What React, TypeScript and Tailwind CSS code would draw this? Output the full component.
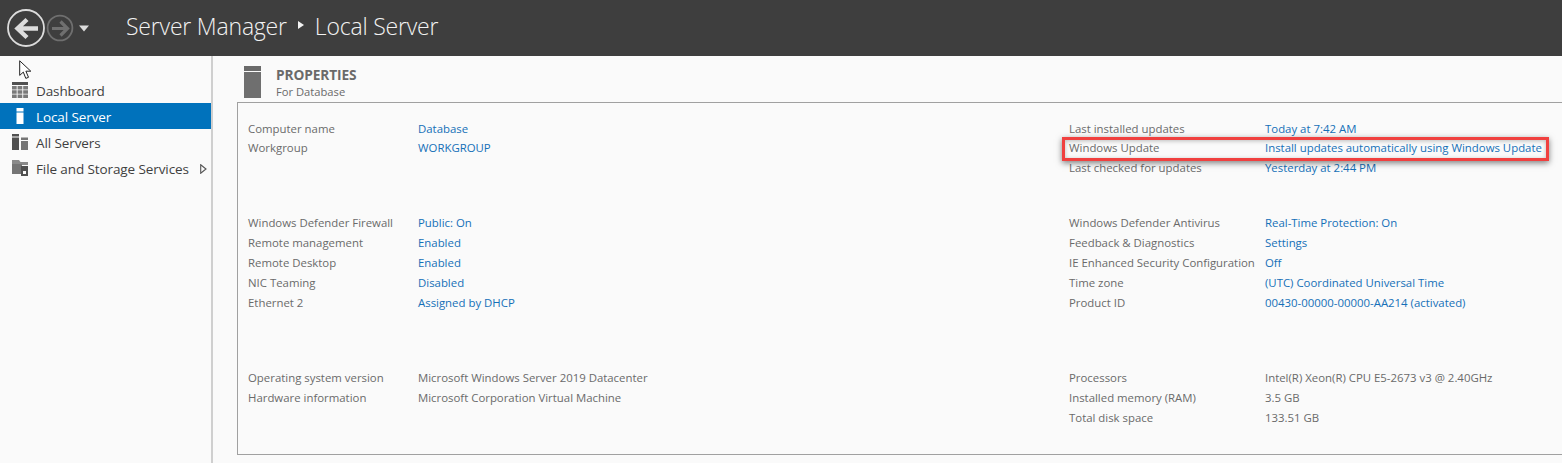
const font = { fontFamily: '"Open Sans", "Noto Sans", sans-serif' };

type Row = [string, string, boolean?];

function Rows({ rows, rowClass, valueX }: { rows: Row[]; rowClass: string; valueX: string }) {
  return (
    <div className="flex flex-col">
      {rows.map(([k, v, plain]) => (
        <div key={k} className={`flex items-center whitespace-nowrap ${rowClass}`}>
          <div className={`${valueX} shrink-0 text-[#6a6a6a]`}>{k}</div>
          <div className={plain ? "text-[#6a6a6a]" : "text-[#1570b8]"}>{v}</div>
        </div>
      ))}
    </div>
  );
}

function NavItem({ icon, label, active, arrow }: { icon: React.ReactNode; label: string; active?: boolean; arrow?: boolean }) {
  return (
    <div className={`flex h-[26px] items-center pl-3 text-[13.5px] tracking-[-0.1px] ${active ? "bg-[#0072bc] text-white" : "text-[#3f3f3f]"}`}>
      <div className="w-4 h-4 mr-2 shrink-0">{icon}</div>
      <span className="pt-[2px]">{label}</span>
      {arrow && (
        <svg width="7" height="10" viewBox="0 0 7 10" className="ml-[11px] mt-[2px]">
          <path d="M.7.7 6 5 .7 9.3Z" fill="none" stroke="#555" strokeWidth="1.1" />
        </svg>
      )}
    </div>
  );
}

export default function App() {
  return (
    <div style={font} className="relative flex h-[463px] w-[1562px] flex-col overflow-hidden bg-[#fafafa]">
      <header className="flex h-[56px] shrink-0 items-center bg-[#3e3e3e] text-[#f2f2f2]">
        <svg width="92" height="50" viewBox="0 0 92 50" className="ml-[6px] shrink-0">
          <g transform="translate(-6 0)">
            <circle cx="26" cy="25" r="18" fill="none" stroke="#dcdcdc" strokeWidth="1.8" />
            <path d="M38 25.5H18M27 16.5l-9.5 9 9.5 9" fill="none" stroke="#dcdcdc" strokeWidth="4.4" />
            <circle cx="60" cy="25" r="12.4" fill="none" stroke="#6f6f6f" strokeWidth="1.8" />
            <path d="M52 25.5h15M60.5 18.5l7 7-7 7" fill="none" stroke="#6f6f6f" strokeWidth="3.2" />
            <path d="M79 22.5h10l-5 6Z" fill="#dcdcdc" />
          </g>
        </svg>
        <div className="ml-[28px] flex items-center pb-[3px] text-[23px] font-light tracking-[-0.2px]">
          <span>Server Manager</span>
          <svg width="6" height="8" viewBox="0 0 6 8" className="mx-[11px] mb-[3px]">
            <path d="M0 0 6 4 0 8Z" fill="#f2f2f2" />
          </svg>
          <span>Local Server</span>
        </div>
      </header>

      <div className="flex min-h-0 flex-1">
        <aside className="w-[213px] shrink-0 border-r-2 border-[#cfcfcf] pt-[21px]">
          <NavItem
            label="Dashboard"
            icon={
              <svg viewBox="0 0 16 16" className="h-4 w-4">
                <path d="M0 0h16v3H0z" fill="#505050" />
                <path d="M0 4h4.7v3.5H0zM5.6 4h4.7v3.5H5.6zM11.2 4H16v3.5h-4.8zM0 8.3h4.7v3.5H0zM5.6 8.3h4.7v3.5H5.6zM11.2 8.3H16v3.5h-4.8zM0 12.6h4.7V16H0zM5.6 12.6h4.7V16H5.6zM11.2 12.6H16V16h-4.8z" fill="#7a7a7a" />
              </svg>
            }
          />
          <NavItem
            active
            label="Local Server"
            icon={
              <svg viewBox="0 0 16 16" className="h-4 w-4">
                <path d="M4.5 0h7v3.4h-7zM4.5 4.6h7V16h-7z" fill="#fff" />
              </svg>
            }
          />
          <NavItem
            label="All Servers"
            icon={
              <svg viewBox="0 0 16 16" className="h-4 w-4">
                <path d="M0 0h7v2.6H0zM0 3.6h7V16H0z" fill="#505050" />
                <path d="M9 3.5h7v2.4H9zM9 7h7v9H9z" fill="#757575" />
              </svg>
            }
          />
          <NavItem
            arrow
            label="File and Storage Services"
            icon={
              <svg viewBox="0 0 16 16" className="h-4 w-4">
                <path d="M0 0h7l1.5 2H16v3H0z" fill="#8a8a8a" />
                <path d="M0 4h10v10H0z" fill="#757575" />
                <path d="M9 6h7v10H9z" fill="#505050" />
                <path d="M11 11h3v3h-3z" fill="#fafafa" />
              </svg>
            }
          />
        </aside>

        <main className="min-w-0 flex-1 pl-[24px]">
          <div className="flex h-[46px] items-start pl-[7px] pt-[10px]">
            <svg width="17" height="32" viewBox="0 0 17 32" className="shrink-0">
              <path d="M0 0h17v5H0z" fill="#6a6a6a" />
              <path d="M0 6h17v26H0z" fill="#6f6f6f" />
            </svg>
            <div className="ml-[15px] -mt-[1px]">
              <div className="text-[13.7px] font-bold leading-[19px] tracking-[-0.1px] text-[#6a6a6a]">PROPERTIES</div>
              <div className="text-[11.2px] leading-[16px] text-[#6a6a6a]">For Database</div>
            </div>
          </div>

          <section className="-mr-2 grid h-[353px] grid-cols-[821px_1fr] border border-[#a0a0a0] pl-[10px] text-[11.4px]">
            <div className="flex flex-col pt-[15.5px]">
              <Rows valueX="w-[170px]" rowClass="h-[19.5px]" rows={[["Computer name", "Database"], ["Workgroup", "WORKGROUP"]]} />
              <div className="mt-[55.5px]">
                <Rows
                  valueX="w-[170px]"
                  rowClass="h-5"
                  rows={[
                    ["Windows Defender Firewall", "Public: On"],
                    ["Remote management", "Enabled"],
                    ["Remote Desktop", "Enabled"],
                    ["NIC Teaming", "Disabled"],
                    ["Ethernet 2", "Assigned by DHCP"],
                  ]}
                />
              </div>
              <div className="mt-[55px]">
                <Rows
                  valueX="w-[170px]"
                  rowClass="h-5"
                  rows={[
                    ["Operating system version", "Microsoft Windows Server 2019 Datacenter", true],
                    ["Hardware information", "Microsoft Corporation Virtual Machine", true],
                  ]}
                />
              </div>
            </div>
            <div className="flex flex-col pt-[15.5px]">
              <Rows
                valueX="w-[196px]"
                rowClass="h-[19.5px]"
                rows={[
                  ["Last installed updates", "Today at 7:42 AM"],
                  ["Windows Update", "Install updates automatically using Windows Update"],
                  ["Last checked for updates", "Yesterday at 2:44 PM"],
                ]}
              />
              <div className="mt-[36px]">
                <Rows
                  valueX="w-[196px]"
                  rowClass="h-5"
                  rows={[
                    ["Windows Defender Antivirus", "Real-Time Protection: On"],
                    ["Feedback & Diagnostics", "Settings"],
                    ["IE Enhanced Security Configuration", "Off"],
                    ["Time zone", "(UTC) Coordinated Universal Time"],
                    ["Product ID", "00430-00000-00000-AA214 (activated)"],
                  ]}
                />
              </div>
              <div className="mt-[55px]">
                <Rows
                  valueX="w-[196px]"
                  rowClass="h-5"
                  rows={[
                    ["Processors", "Intel(R) Xeon(R) CPU E5-2673 v3 @ 2.40GHz", true],
                    ["Installed memory (RAM)", "3.5 GB", true],
                    ["Total disk space", "133.51 GB", true],
                  ]}
                />
              </div>
            </div>
          </section>
        </main>
      </div>

      <div className="absolute left-[1062px] top-[137px] h-[24px] w-[487px] border-[3px] border-[#f0403f] shadow-[0_2px_6px_rgba(0,0,0,0.5),inset_0_1px_4px_rgba(0,0,0,0.25)]" />

      <svg width="14" height="20" viewBox="0 0 14 20" className="absolute left-[19px] top-[60px]">
        <path d="M.7.8v14.6l3.6-3.3 2.5 6.3 2.7-1.1-2.6-6.1h4.9Z" fill="#fff" stroke="#222" strokeWidth="1" />
      </svg>
    </div>
  );
}
